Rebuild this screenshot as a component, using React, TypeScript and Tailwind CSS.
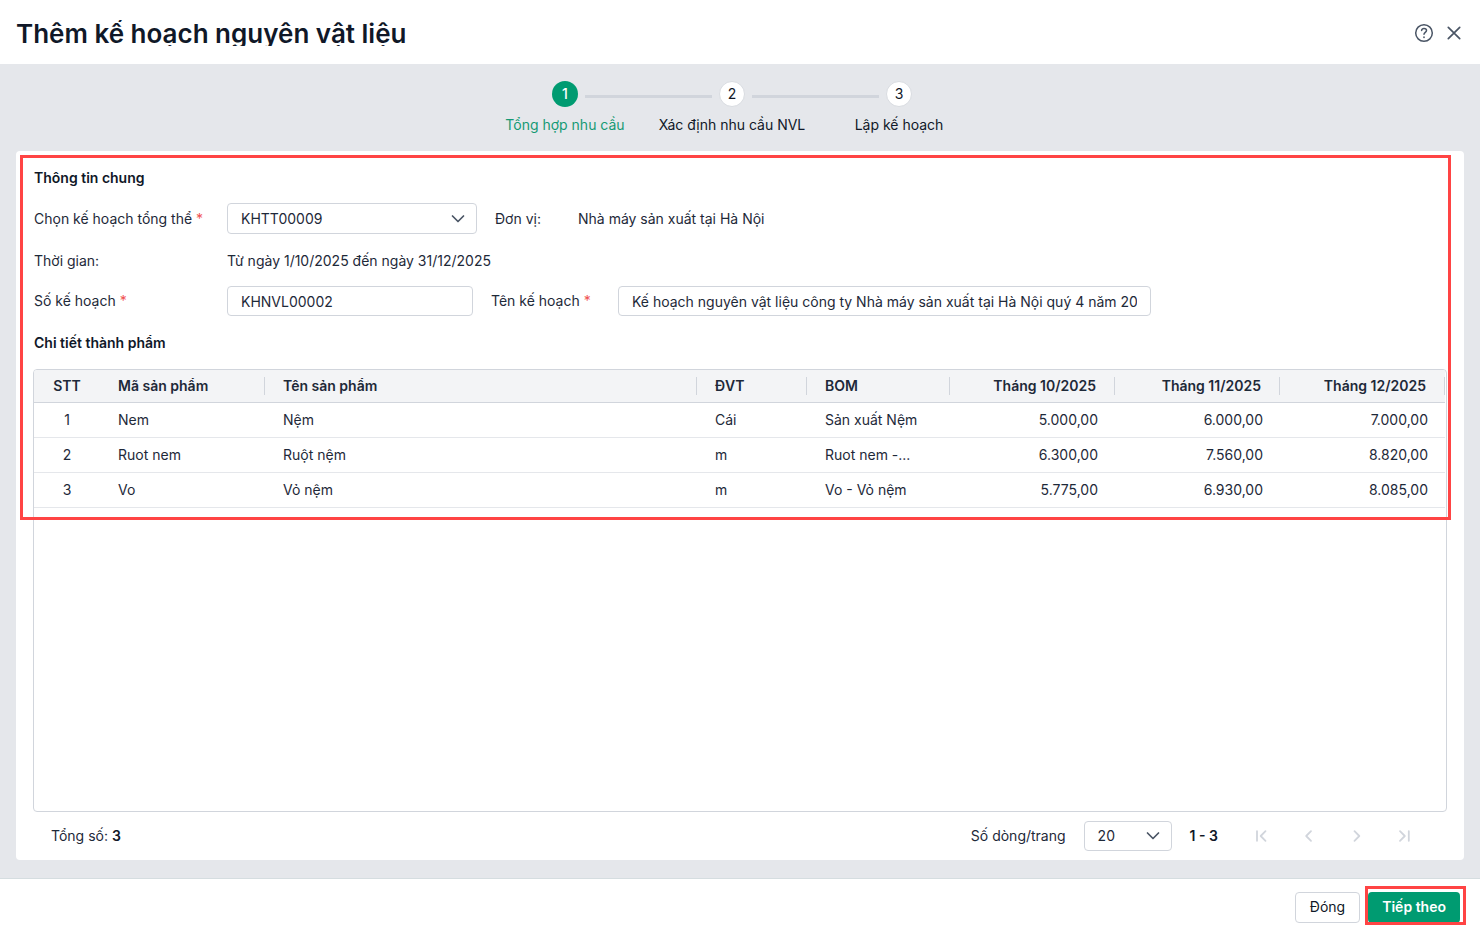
import type { ReactNode } from "react";

const steps = [
  { id: 1, label: "Tổng hợp nhu cầu" },
  { id: 2, label: "Xác định nhu cầu NVL" },
  { id: 3, label: "Lập kế hoạch" },
];

const columns = [
  { title: "STT", width: "w-[66px]", align: "text-center", divider: false },
  { title: "Mã sản phẩm", width: "w-[165px]", align: "text-left", divider: true },
  { title: "Tên sản phẩm", width: "", align: "text-left", divider: true },
  { title: "ĐVT", width: "w-[110px]", align: "text-left", divider: true },
  { title: "BOM", width: "w-[143px]", align: "text-left", divider: true },
  { title: "Tháng 10/2025", width: "w-[165px]", align: "text-right", divider: true },
  { title: "Tháng 11/2025", width: "w-[165px]", align: "text-right", divider: true },
  { title: "Tháng 12/2025", width: "w-[165px]", align: "text-right", divider: true },
];

const rows = [
  ["1", "Nem", "Nệm", "Cái", "Sản xuất Nệm", "5.000,00", "6.000,00", "7.000,00"],
  ["2", "Ruot nem", "Ruột nệm", "m", "Ruot nem -...", "6.300,00", "7.560,00", "8.820,00"],
  ["3", "Vo", "Vỏ nệm", "m", "Vo - Vỏ nệm", "5.775,00", "6.930,00", "8.085,00"],
];

const pagerButtons = [
  { label: "Trang đầu", path: "M6 5.200v9.600M14.500 5.200 9.700 10l4.800 4.800" },
  { label: "Trang trước", path: "M12 5.200 7.200 10l4.800 4.800" },
  { label: "Trang sau", path: "m7.500 5.200 4.800 4.800-4.800 4.800" },
  { label: "Trang cuối", path: "M13.800 5.200v9.600M5 5.200 9.800 10 5 14.800" },
];

function Icon({ children, className }: { children: ReactNode; className: string }) {
  return (
    <svg
      viewBox="0 0 20 20"
      fill="none"
      stroke="currentColor"
      strokeLinecap="round"
      strokeLinejoin="round"
      className={className}
      aria-hidden="true"
    >
      {children}
    </svg>
  );
}

function Chevron() {
  return (
    <Icon className="size-5 absolute right-[9px] top-1/2 -translate-y-1/2 pointer-events-none text-gray-600">
      <path d="m4.500 7 5.500 5.500L15.500 7" strokeWidth="1.7" />
    </Icon>
  );
}

function Required() {
  return <span className="text-[#f05252]"> *</span>;
}

function Stepper() {
  return (
    <ol className="flex justify-center pt-4 pr-4 pb-4">
      {steps.map((step, i) => (
        <li key={step.id} className="w-[167px] flex flex-col items-center">
          <div className="w-full flex items-center">
            <span className={`h-[3px] flex-1 mr-[7px] mt-1 ${i > 0 ? "bg-gray-300" : ""}`} />
            <span
              className={`size-[26px] my-px rounded-full flex items-center justify-center ${
                i === 0
                  ? "bg-[#009b71] font-medium text-white"
                  : "bg-white border border-[#d9dce1] text-gray-900"
              }`}
            >
              {step.id}
            </span>
            <span
              className={`h-[3px] flex-1 ml-[7px] mt-1 ${i < steps.length - 1 ? "bg-gray-300" : ""}`}
            />
          </div>
          <span className={`mt-[7px] leading-5 whitespace-nowrap ${i === 0 ? "text-[#159a74]" : "text-gray-900"}`}>
            {step.label}
          </span>
        </li>
      ))}
    </ol>
  );
}

function PlanForm() {
  return (
    <section className="px-px">
      <h2 className="font-semibold leading-5 text-gray-900">Thông tin chung</h2>
      <div className="mt-[15px] flex items-center">
        <label htmlFor="master-plan" className="w-[193px] shrink-0">
          Chọn kế hoạch tổng thể
          <Required />
        </label>
        <div className="relative w-[250px] shrink-0">
          <select
            id="master-plan"
            className="w-full h-[31px] px-[13px] appearance-none rounded border border-gray-300 bg-white"
          >
            <option>KHTT00009</option>
          </select>
          <Chevron />
        </div>
        <span className="ml-[18px] w-[83px] shrink-0">Đơn vị:</span>
        <span>Nhà máy sản xuất tại Hà Nội</span>
      </div>
      <div className="mt-[17px] flex items-center leading-5">
        <span className="w-[193px] shrink-0">Thời gian:</span>
        <span>Từ ngày 1/10/2025 đến ngày 31/12/2025</span>
      </div>
      <div className="mt-[15px] flex items-center">
        <label htmlFor="plan-code" className="w-[193px] shrink-0">
          Số kế hoạch
          <Required />
        </label>
        <input
          id="plan-code"
          defaultValue="KHNVL00002"
          className="w-[246px] h-[30px] px-[13px] rounded border border-gray-300"
        />
        <label htmlFor="plan-name" className="ml-[18px] w-[127px] shrink-0">
          Tên kế hoạch
          <Required />
        </label>
        <input
          id="plan-name"
          defaultValue="Kế hoạch nguyên vật liệu công ty Nhà máy sản xuất tại Hà Nội quý 4 năm 2025"
          className="w-[533px] h-[30px] px-[13px] rounded border border-gray-300"
        />
      </div>
      <h2 className="mt-[17px] font-semibold leading-5 text-gray-900">Chi tiết thành phẩm</h2>
    </section>
  );
}

function ProductTable() {
  return (
    <div className="mt-4 flex-1 rounded border border-gray-300 overflow-hidden pr-px">
      <table className="w-full table-fixed border-separate border-spacing-0">
        <thead>
          <tr className="bg-gray-100">
            {columns.map((col) => (
              <th
                key={col.title}
                className={`h-[33px] p-0 border-b border-gray-300 font-semibold text-gray-800 ${col.width} ${col.align}`}
              >
                <div
                  className={`h-[18px] leading-[18px] ${
                    col.divider ? "px-[18px] border-r border-gray-300" : ""
                  }`}
                >
                  {col.title}
                </div>
              </th>
            ))}
          </tr>
        </thead>
        <tbody>
          {rows.map((row) => (
            <tr key={row[0]}>
              {row.map((cell, i) => (
                <td
                  key={columns[i].title}
                  className={`h-[35px] py-0 border-b border-gray-200 truncate ${columns[i].align} ${
                    i === 0 ? "px-0" : "pl-[18px] pr-[17px]"
                  }`}
                >
                  {cell}
                </td>
              ))}
            </tr>
          ))}
        </tbody>
      </table>
    </div>
  );
}

function Pager() {
  return (
    <div className="h-12 px-[18px] flex items-center">
      <p>
        Tổng số: <b className="font-semibold text-gray-900">3</b>
      </p>
      <label htmlFor="page-size" className="ml-auto">
        Số dòng/trang
      </label>
      <div className="relative ml-[18px] w-[88px]">
        <select
          id="page-size"
          className="w-full h-[30px] px-[13px] appearance-none rounded border border-gray-300 bg-white"
        >
          <option>20</option>
        </select>
        <Chevron />
      </div>
      <span className="ml-[18px] mr-[19px] font-semibold text-gray-900">1 - 3</span>
      <div className="flex text-gray-300">
        {pagerButtons.map((button) => (
          <button
            key={button.label}
            type="button"
            aria-label={button.label}
            className="w-12 h-8 flex items-center justify-center"
          >
            <Icon className="size-5">
              <path d={button.path} strokeWidth="1.8" />
            </Icon>
          </button>
        ))}
      </div>
    </div>
  );
}

export default function App() {
  return (
    <div className="min-h-dvh flex flex-col bg-[#e5e7eb] font-['Inter',sans-serif] text-sm text-gray-800">
      <header className="h-16 px-4 pt-0.5 flex items-center bg-white">
        <h1 className="text-[26px] leading-7 h-[26px] overflow-hidden font-semibold text-gray-900">
          Thêm kế hoạch nguyên vật liệu
        </h1>
        <div className="ml-auto flex gap-2.5 text-gray-600">
          <button type="button" aria-label="Trợ giúp">
            <Icon className="size-5">
              <circle cx="10" cy="10" r="8.3" strokeWidth="1.5" />
              <path
                d="M7.600 7.400C7.800 6.100 8.800 5.400 10 5.400c1.400 0 2.500.8 2.500 2.100 0 1.800-2.500 1.900-2.500 3.800"
                strokeWidth="1.5"
              />
              <path d="M10 14.200v.1" strokeWidth="1.7" />
            </Icon>
          </button>
          <button type="button" aria-label="Đóng cửa sổ">
            <Icon className="size-5">
              <path d="m4.300 4.300 11.400 11.400M15.700 4.300 4.300 15.700" strokeWidth="1.7" />
            </Icon>
          </button>
        </div>
      </header>

      <main className="flex-1 flex flex-col px-4 pb-[18px]">
        <Stepper />
        <div className="relative flex-1 flex flex-col rounded bg-white px-[17px] pt-[17px]">
          <PlanForm />
          <ProductTable />
          <Pager />
          <div className="absolute top-1 left-1 right-[13px] h-[365px] border-3 border-[#ff4444] pointer-events-none" />
        </div>
      </main>

      <footer className="h-[53px] px-5 pt-1 flex items-center justify-end gap-2 bg-white border-t border-[#d5dde0]">
        <button type="button" className="h-[31px] px-[14px] rounded border border-gray-300 text-gray-900">
          Đóng
        </button>
        <div className="relative flex">
          <button type="button" className="h-[31px] px-[14px] rounded bg-[#009b71] font-semibold text-white">
            Tiếp theo
          </button>
          <div className="absolute -top-1.5 -bottom-0.5 -left-[3px] -right-1.5 border-3 border-[#ff4444] pointer-events-none" />
        </div>
      </footer>
    </div>
  );
}
